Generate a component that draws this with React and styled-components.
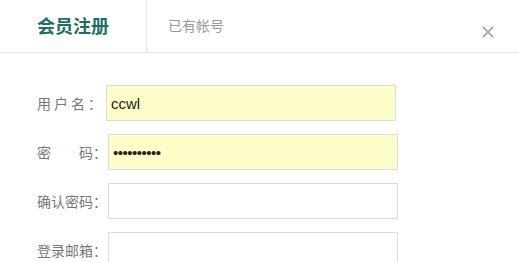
import React from 'react';
import styled, { createGlobalStyle } from 'styled-components';

const GlobalStyle = createGlobalStyle`
    body {
        margin: 0;
        background: #fff;
        font-family: "Microsoft YaHei", "Noto Sans CJK SC", "Liberation Sans", sans-serif;
    }
`;

const Dialog = styled.div`
    width: 519px;
    height: 262px;
    overflow: hidden;
    background: #fff;
`;

const Header = styled.div`
    display: flex;
    align-items: stretch;
    height: 52px;
    border-bottom: 1px solid #e3e3e3;
`;

const Tab = styled.div`
    display: flex;
    align-items: center;
    box-sizing: border-box;
    width: ${p => (p.active ? '147px' : 'auto')};
    padding-left: ${p => (p.active ? '37px' : '21px')};
    border-right: ${p => (p.active ? '1px solid #e6e6e6' : 'none')};
    font-size: ${p => (p.active ? '18px' : '14px')};
    font-weight: ${p => (p.active ? 'bold' : 'normal')};
    color: ${p => (p.active ? '#1d6e68' : '#999')};
    padding-bottom: 2px;
`;

const Close = styled.div`
    margin-left: auto;
    margin-right: 25px;
    display: flex;
    align-items: center;
    padding-top: 12px;
`;

const Form = styled.div`
    padding: 32px 0 0 37px;
`;

const Row = styled.div`
    display: flex;
    align-items: center;
    margin-bottom: 13px;
`;

const Label = styled.label`
    width: ${p => p.w || '71px'};
    font-size: 14px;
    color: #777;
    letter-spacing: ${p => p.spacing || '0'};
    white-space: pre;
`;

const Input = styled.input`
    box-sizing: border-box;
    width: 290px;
    height: 36px;
    border: 1px solid #dcdcdc;
    background: ${p => (p.filled ? '#fefec9' : '#fff')};
    padding: 0 4px;
    font-size: 15px;
    color: #222;
    font-family: "Liberation Sans", "Noto Sans CJK SC", sans-serif;
    outline: none;
`;

const Password = styled(Input)`
    font-size: 15px;
    letter-spacing: -0.5px;
`;

export default function App() {
    return (
        <Dialog>
            <GlobalStyle />
            <Header>
                <Tab active>会员注册</Tab>
                <Tab>已有帐号</Tab>
                <Close>
                    <svg width="12" height="12" viewBox="0 0 12 12">
                        <path d="M1 1 L11 11 M11 1 L1 11" stroke="#9a9a9a" strokeWidth="1.6" />
                    </svg>
                </Close>
            </Header>
            <Form>
                <Row>
                    <Label w="69px" spacing="3px">用户名：</Label>
                    <Input filled defaultValue="ccwl" />
                </Row>
                <Row>
                    <Label>密　　码：</Label>
                    <Password filled type="password" defaultValue="ccwlccwlcc" />
                </Row>
                <Row>
                    <Label>确认密码：</Label>
                    <Input />
                </Row>
                <Row>
                    <Label>登录邮箱：</Label>
                    <Input />
                </Row>
            </Form>
        </Dialog>
    );
}
